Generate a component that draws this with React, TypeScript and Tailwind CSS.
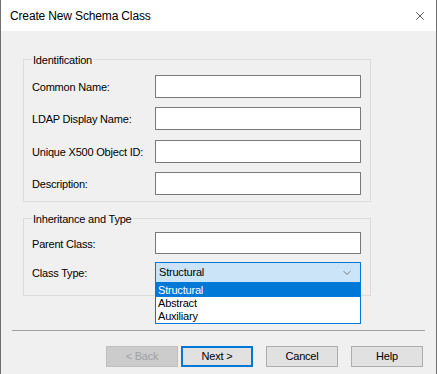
import { X, ChevronDown } from 'lucide-react';

const fields = ['Common Name:', 'LDAP Display Name:', 'Unique X500 Object ID:', 'Description:'];

function TextBox() {
  return <div className="w-[206px] h-[23px] bg-white border border-[#7a7a7a]" />;
}

function Row({ label, children }: { label: string; children: React.ReactNode }) {
  return (
    <div className="flex items-center">
      <span className="w-[131px] pl-[8px] pt-[2px]">{label}</span>
      {children}
    </div>
  );
}

function Button({ label, primary, disabled }: { label: string; primary?: boolean; disabled?: boolean }) {
  let cls = 'bg-[#e1e1e1] border border-[#adadad] text-black';
  if (primary) cls = 'bg-[#e1e1e1] border-2 border-[#0078d7] text-black';
  if (disabled) cls = 'bg-[#cccccc] border border-[#bfbfbf] text-[#a0a0a0]';
  return (
    <div className={`w-[72px] h-[21px] flex items-center justify-center ${cls}`}>{label}</div>
  );
}

export default function App() {
  return (
    <div
      className="w-[437px] h-[374px] bg-[#f0f0f0] border-x border-[#707070] text-[11px] tracking-[-0.2px] text-black flex flex-col"
      style={{ fontFamily: '"Liberation Sans", Arial, sans-serif' }}
    >
      {/* Title bar */}
      <div className="h-[31px] bg-white flex items-center justify-between pl-[9px] pr-[9px]">
        <span className="text-[12px] tracking-[-0.15px] pt-[1px]">Create New Schema Class</span>
        <X className="w-[14px] h-[14px] text-black" strokeWidth={1.1} />
      </div>

      <div className="pl-[22px] pt-[28px]">
        {/* Identification */}
        <div className="relative w-[348px] h-[143px] border border-[#dcdcdc] pt-[15px]">
          <span className="absolute -top-[8px] left-[8px] px-[1px] bg-[#f0f0f0]">Identification</span>
          <div className="flex flex-col gap-[9px]">
            {fields.map((f, i) => (
              <div key={f} className={i === 2 ? 'mt-[1px]' : ''}>
                <Row label={f}>
                  <TextBox />
                </Row>
              </div>
            ))}
          </div>
        </div>

        {/* Inheritance and Type */}
        <div className="relative w-[348px] h-[78px] border border-[#dcdcdc] mt-[16px] pt-[13px]">
          <span className="absolute -top-[8px] left-[8px] px-[1px] bg-[#f0f0f0]">Inheritance and Type</span>
          <div className="flex flex-col gap-[8px]">
            <Row label="Parent Class:">
              <div className="w-[206px] h-[22px] bg-white border border-[#7a7a7a]" />
            </Row>
            <Row label="Class Type:">
              <div className="relative">
                <div className="w-[206px] h-[21px] bg-[#cce4f7] border border-[#0078d7] flex items-center justify-between pl-[3px] pr-[7px]">
                  <span>Structural</span>
                  <ChevronDown className="w-[12px] h-[12px] text-[#555]" strokeWidth={1.5} />
                </div>
                <div className="absolute left-0 top-[20px] w-[206px] bg-white border border-[#0078d7] flex flex-col">
                  <span className="h-[14px] leading-[14px] bg-[#0078d7] text-white pl-[2px]">Structural</span>
                  <span className="h-[13px] leading-[13px] pl-[2px]">Abstract</span>
                  <span className="h-[13px] leading-[13px] pl-[2px]">Auxiliary</span>
                </div>
              </div>
            </Row>
          </div>
        </div>
      </div>

      {/* Separator */}
      <div className="mx-[11px] mt-[34px] h-px bg-[#a0a0a0]" />

      {/* Buttons */}
      <div className="flex pl-[105px] mt-[15px]">
        <Button label="< Back" disabled />
        <div className="ml-[3px]">
          <Button label="Next >" primary />
        </div>
        <div className="ml-[13px]">
          <Button label="Cancel" />
        </div>
        <div className="ml-[13px]">
          <Button label="Help" />
        </div>
      </div>
    </div>
  );
}
